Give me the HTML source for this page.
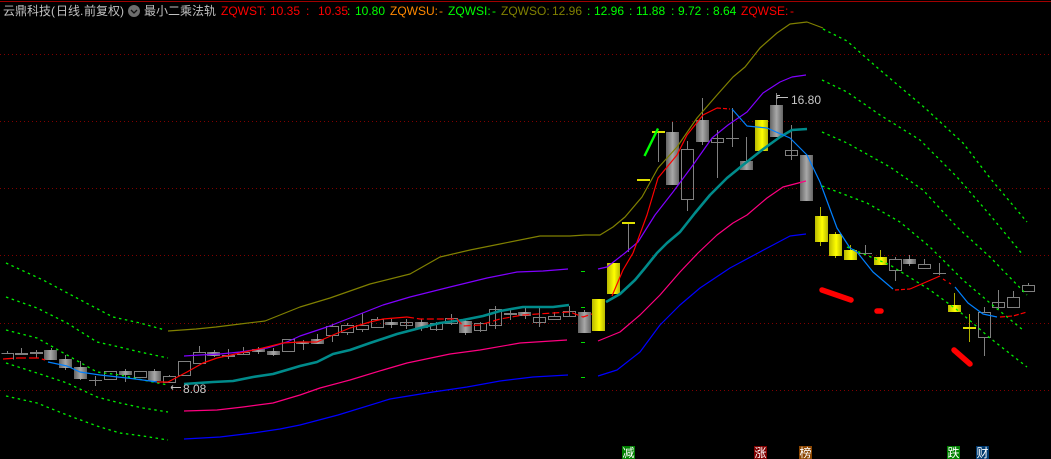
<!DOCTYPE html>
<html><head><meta charset="utf-8">
<style>
html,body{margin:0;padding:0;background:#000;width:1051px;height:459px;overflow:hidden}
#w{position:relative;width:1051px;height:459px;background:#000;overflow:hidden;font:12px "Liberation Sans","WenQuanYi Zen Hei","Noto Sans CJK SC",sans-serif}
#w span{position:absolute;top:3px;line-height:16px;white-space:pre}
.r{color:#f00}.g{color:#0f0}.o{color:#f80}.l{color:#808000}.w{color:#c0c0c0}
#w b{position:absolute;top:446px;width:13px;height:13px;font:normal 12px/13px "WenQuanYi Zen Hei","Noto Sans CJK SC",sans-serif;color:#fff;text-align:center}
svg{position:absolute;left:0;top:0}
</style></head><body><div id="w">
<svg width="1051" height="459" viewBox="0 0 1051 459" xmlns="http://www.w3.org/2000/svg">
<defs>
<linearGradient id="gy"><stop offset="0" stop-color="#646464"/><stop offset=".5" stop-color="#a8a8a8"/><stop offset="1" stop-color="#646464"/></linearGradient>
<linearGradient id="ye"><stop offset="0" stop-color="#b8b800"/><stop offset=".55" stop-color="#ffff00"/><stop offset="1" stop-color="#b8b800"/></linearGradient>
</defs>
<path d="M0 1.5H1051" stroke="#a00000" stroke-width="1" fill="none" shape-rendering="crispEdges"/>
<path d="M0 54.5H1051M0 121.5H1051M0 188.5H1051M0 255.5H1051M0 323.5H1051M0 390.5H1051" stroke="#800000" stroke-dasharray="1 3" fill="none" shape-rendering="crispEdges"/>
<!-- wicks gray -->
<path shape-rendering="crispEdges" stroke="#808080" fill="none" d="M7.5 351V354M21.5 348V354M36.5 350V358M51.5 348V351M65.5 355V370M80.5 361V380M95.5 376V386M125.5 369V382M154.5 369V372M169.5 375V377M199.5 346V353M214.5 350V357M228.5 349V359M243.5 347V355M258.5 347V354M273.5 348V356M303.5 340V350M317.5 334V340M332.5 324V326M332.5 335V342M347.5 323V325M347.5 332V335M362.5 313V325M362.5 329V332M377.5 317V319M391.5 319V328M406.5 319V329M421.5 319V331M436.5 322V331M451.5 314V325M465.5 319V335M480.5 322V332M495.5 306V329M510.5 310V320M525.5 308V319M539.5 308V327M554.5 312V316M569.5 306V317M584.5 310V312M628.5 223V252M658.5 132V162M672.5 122V132M687.5 141V149M687.5 199V211M702.5 98V145M717.5 130V178M732.5 108V147M746.5 137V161M776.5 93V105M791.5 125V160M865.5 245V255M895.5 257V259M895.5 270V281M909.5 255V266M924.5 259V264M939.5 263V275M984.5 307V312M984.5 337V356M998.5 290V309M1013.5 291V297M1028.5 283V285"/>
<path shape-rendering="crispEdges" stroke="#b0b000" fill="none" d="M820.5 207V246M835.5 232V258M850.5 245V251M880.5 250V258M954.5 293V306M969.5 314V342"/>
<!-- flats / crosses -->
<path shape-rendering="crispEdges" stroke="#808080" fill="none" d="M89 380.5H102M859 253.5H872M933 273.5H946M726 138.5H739"/>
<path shape-rendering="crispEdges" stroke="#e0e000" stroke-width="2" fill="none" d="M622 223H635M637 180H650M652 132H665M963 328H976"/>
<!-- hollow bodies -->
<path shape-rendering="crispEdges" stroke="#808080" fill="none" d="M1.5 353.5H13.5V359.5M104.5 371.5h12v8h-12zM134.5 371.5h12v6h-12zM163.5 376.5h12v6h-12zM178.5 361.5h12v14h-12zM193.5 352.5h12v11h-12zM237.5 352.5h12v2h-12zM282.5 339.5h12v12h-12zM326.5 326.5h12v9h-12zM341.5 325.5h12v7h-12zM356.5 325.5h12v4h-12zM371.5 319.5h12v8h-12zM400.5 322.5h12v3h-12zM430.5 323.5h12v6h-12zM445.5 318.5h12v5h-12zM474.5 323.5h12v7h-12zM489.5 309.5h12v16h-12zM533.5 317.5h12v5h-12zM548.5 316.5h12v3h-12zM563.5 311.5h12v5h-12zM681.5 149.5h12v50h-12zM711.5 138.5h12v4h-12zM785.5 150.5h12v5h-12zM889.5 259.5h12v11h-12zM918.5 264.5h12v4h-12zM978.5 312.5h12v25h-12zM992.5 302.5h12v5h-12zM1007.5 297.5h12v10h-12zM1022.5 285.5h12v6h-12z"/>
<!-- gray bodies -->
<g fill="url(#gy)" shape-rendering="crispEdges">
<rect x="15" y="353" width="13" height="2" fill="#808080"/><rect x="30" y="352" width="13" height="2" fill="#808080"/>
<rect x="44" y="350" width="13" height="10"/><rect x="59" y="359" width="13" height="9"/><rect x="74" y="367" width="13" height="12"/>
<rect x="119" y="371" width="13" height="4"/><rect x="148" y="371" width="13" height="10"/>
<rect x="207" y="352" width="13" height="4"/><rect x="222" y="355" width="13" height="2" fill="#808080"/>
<rect x="252" y="349" width="13" height="3"/><rect x="267" y="351" width="13" height="4"/>
<rect x="296" y="342" width="13" height="2"/><rect x="311" y="339" width="13" height="5"/>
<rect x="385" y="322" width="13" height="3"/><rect x="415" y="322" width="13" height="6"/>
<rect x="459" y="321" width="13" height="12"/><rect x="504" y="313" width="13" height="2" fill="#808080"/>
<rect x="518" y="312" width="13" height="4"/><rect x="578" y="312" width="13" height="21"/>
<rect x="666" y="132" width="13" height="53"/><rect x="696" y="120" width="13" height="22"/>
<rect x="740" y="161" width="13" height="9"/><rect x="770" y="105" width="13" height="32"/>
<rect x="800" y="155" width="13" height="46"/><rect x="903" y="259" width="13" height="5"/>
</g>
<!-- yellow bodies -->
<g fill="url(#ye)" shape-rendering="crispEdges">
<rect x="592" y="299" width="13" height="32"/><rect x="607" y="263" width="13" height="31"/>
<rect x="755" y="120" width="13" height="31"/><rect x="815" y="216" width="13" height="26"/>
<rect x="829" y="234" width="13" height="22"/><rect x="844" y="250" width="13" height="10"/>
<rect x="874" y="257" width="13" height="8"/><rect x="948" y="305" width="13" height="7"/>
</g>
<!-- green dashed bands -->
<g fill="none" stroke="#00f000" stroke-width="1.3" stroke-dasharray="2.5 3.5">
<polyline points="6,263 43,280 90,305 113,317 140,323 165,330"/>
<polyline points="6,297 37,308 67,323 97,342 115,346 140,352 168,358"/>
<polyline points="6,330 37,338 53,347 67,355 97,372 120,375 143,380 168,385"/>
<polyline points="6,363 37,373 67,383 97,397 120,403 143,408 168,412"/>
<polyline points="6,396 37,403 67,415 97,426 120,433 143,436 168,440"/>
<polyline points="823,29 847,41 880,70 925,108 963,143 990,178 1027,222"/>
<polyline points="822,80 847,92 880,115 920,140 957,177 990,215 1023,255"/>
<polyline points="822,132 847,143 890,167 923,190 957,227 990,257 1027,295"/>
<polyline points="822,186 867,203 900,222 930,247 963,280 990,303 1023,330"/>
<polyline points="847,247 890,265 930,290 960,312 990,338 1027,367"/>
</g>
<path d="M581 271.5h4M581 307.5h4M581 342.5h4M581 377.5h4" stroke="#00e000" fill="none" shape-rendering="crispEdges"/>
<!-- band lines -->
<g fill="none" stroke-linejoin="round">
<polyline stroke="#808000" stroke-width="1.2" points="168,331 196,329 216,327 240,324 265,321 275,317 290,311 300,307 330,298 370,284 410,274 440,257 470,250 500,244 540,236 570,236 585,235 600,235 613,227 625,217 642,197 658,168 677,147 697,118 717,95 733,77 745,67 760,48 777,33 790,24 807,22 823,28"/>
<polyline stroke="#8000ff" stroke-width="1.2" points="184,356 200,355 220,354 240,352 267,348 287,342 300,336 327,327 350,318 383,305 410,297 450,287 487,278 517,272 543,271 568,269"/>
<polyline stroke="#8000ff" stroke-width="1.2" points="598,269 607,267 625,253 638,242 655,215 673,192 693,165 712,138 728,125 747,112 763,93 780,82 792,77 806,75"/>
<polyline stroke="#008b8b" stroke-width="2.6" points="184,384 213,382 233,381 253,377 273,374 290,369 300,366 317,362 333,354 350,350 370,343 397,334 420,328 440,323 463,320 483,316 500,311 523,307 553,307 569,305"/>
<polyline stroke="#008b8b" stroke-width="2.6" points="606,302 620,294 635,280 645,268 657,253 667,243 680,232 695,213 710,195 727,178 743,165 762,150 780,137 792,130 807,129"/>
<polyline stroke="#ff0080" stroke-width="1.2" points="184,411 217,410 243,407 273,403 300,395 320,388 350,380 383,370 407,363 450,354 480,350 520,343 567,340"/>
<polyline stroke="#ff0080" stroke-width="1.2" points="598,341 620,332 640,315 660,295 680,272 698,253 717,235 733,223 747,215 767,198 783,187 806,181"/>
<polyline stroke="#0000ff" stroke-width="1.2" points="184,439 220,437 253,433 280,429 300,425 338,415 390,399 433,392 467,387 500,381 533,377 568,375"/>
<polyline stroke="#0000ff" stroke-width="1.2" points="598,376 617,370 640,352 660,325 680,305 700,288 730,268 758,253 773,245 790,236 806,234"/>
<!-- trend line -->
<polyline stroke="#f00" stroke-width="1.3" stroke-dasharray="10 3" points="3,359 18,358 39,358 45,360"/>
<polyline stroke="#0080ff" stroke-width="1.2" points="48,362 67,366 80,372 100,375 127,378 143,380 157,382"/>
<polyline stroke="#f00" stroke-width="1.2" points="157,382 168,382 187,372 203,363 217,358 240,353 263,348 283,343 300,342 317,342 333,335 350,328 370,322 383,319 407,317"/>
<polyline stroke="#f00" stroke-width="1.2" stroke-dasharray="7 3" points="407,317 420,319 457,319 463,326 480,325 500,319 523,315 553,313 570,312 583,317 592,314"/>
<polyline stroke="#f00" stroke-width="1.2" points="612,296 623,270 633,253 647,215 658,178 677,155 687,135 703,115 717,108"/>
<polyline stroke="#f00" stroke-width="1.2" stroke-dasharray="4 2" points="717,108 730,109"/>
<polyline stroke="#0080ff" stroke-width="1.2" points="732,109 747,126 767,128 790,138 807,155 820,182 837,228 850,248 857,252 873,272 893,289"/>
<polyline stroke="#f00" stroke-width="1.2" stroke-dasharray="4 2" points="895,290 910,289"/>
<polyline stroke="#f00" stroke-width="1.2" points="910,289 940,276"/>
<polyline stroke="#f00" stroke-width="1.2" stroke-dasharray="3 4" points="943,279 951,284"/>
<polyline stroke="#0080ff" stroke-width="1.2" points="955,287 968,303 983,314 997,317"/>
<polyline stroke="#f00" stroke-width="1.2" stroke-dasharray="5 2" points="1000,317 1013,316 1027,312"/>
<!-- strokes -->
<path d="M644.5 156L658 128.5" stroke="#00ff00" stroke-width="2.4"/>
<path d="M822 290L851 300" stroke="#f00" stroke-width="5.5" stroke-linecap="round"/>
<path d="M877 311H881" stroke="#f00" stroke-width="5.5" stroke-linecap="round"/>
<path d="M954 350L970 364" stroke="#f00" stroke-width="5.5" stroke-linecap="round"/>
<!-- markers -->
<path d="M171 387.5H181M171 387.5l2-2M171 387.5l2 2" stroke="#c0c0c0"/>
<path d="M777 95.5V99M777 95.5h3M777 97.5h11" stroke="#c0c0c0"/>
</g>
<circle cx="134" cy="11" r="6" fill="#6e6e6e"/>
<path d="M131 10l3 3 3-3" stroke="#111" stroke-width="1.3" fill="none"/>
<text x="183" y="393" font-family="Liberation Sans" font-size="12" fill="#c8c8c8">8.08</text>
<text x="791" y="104" font-family="Liberation Sans" font-size="12" fill="#c8c8c8">16.80</text>
</svg>
<span class="w" style="left:3px">云鼎科技</span>
<span class="w" style="left:51px">(</span>
<span class="w" style="left:56px">日线</span>
<span class="w" style="left:80px">.</span>
<span class="w" style="left:84px">前复权</span>
<span class="w" style="left:120px">)</span>
<span class="w" style="left:144px">最小二乘法轨</span>
<span class="r" style="left:221px">ZQWST:</span>
<span class="r" style="left:270px">10.35</span>
<span class="r" style="left:306px">:</span>
<span class="r" style="left:318px">10.35</span>
<span class="g" style="left:347px">:</span>
<span class="g" style="left:355px">10.80</span>
<span class="o" style="left:390px">ZQWSU:</span>
<span class="o" style="left:439px">-</span>
<span class="g" style="left:448px">ZQWSI:</span>
<span class="g" style="left:492px">-</span>
<span class="l" style="left:501px">ZQWSO:</span>
<span class="l" style="left:552px">12.96</span>
<span class="g" style="left:587px">:</span>
<span class="g" style="left:594px">12.96</span>
<span class="g" style="left:629px">:</span>
<span class="g" style="left:636px">11.88</span>
<span class="g" style="left:671px">:</span>
<span class="g" style="left:678px">9.72</span>
<span class="g" style="left:706px">:</span>
<span class="g" style="left:713px">8.64</span>
<span class="r" style="left:741px">ZQWSE:</span>
<span class="r" style="left:790px">-</span>
<b style="left:622px;background:#008000">减</b>
<b style="left:754px;background:#800000">涨</b>
<b style="left:799px;background:#8b4500">榜</b>
<b style="left:947px;background:#008000">跌</b>
<b style="left:976px;background:#003a70">财</b>
</div></body></html>
